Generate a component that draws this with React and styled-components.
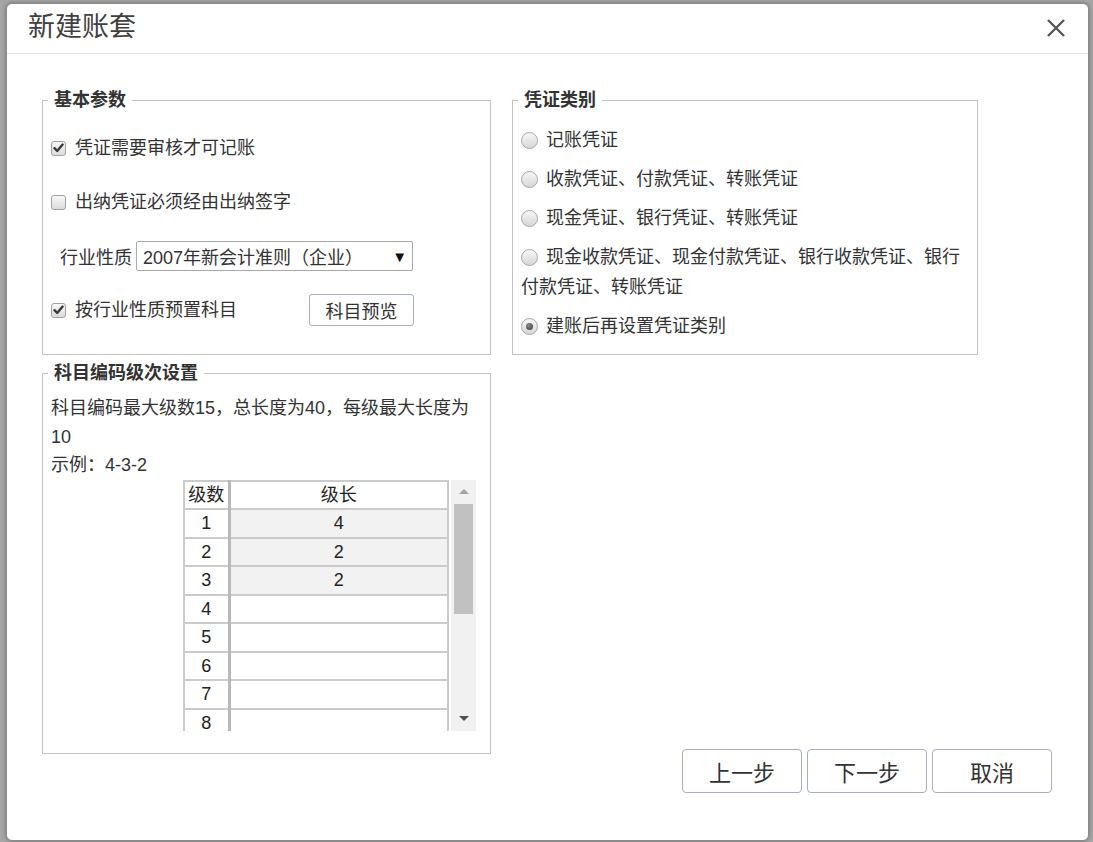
import React from 'react';
import styled, { createGlobalStyle } from 'styled-components';

const GlobalStyle = createGlobalStyle`
  html, body { margin: 0; padding: 0; background: #a6a6a6; }
  body { font-family: "Liberation Sans", "Noto Sans CJK SC", sans-serif; color: #333; }
  * { box-sizing: border-box; }
`;

const Page = styled.div`
  width: 1093px;
  height: 842px;
  padding: 3px 0 0 6px;
`;

const Dialog = styled.div`
  width: 1083px;
  height: 838px;
  background: #fff;
  border: 1px solid #8a8a8a;
  border-radius: 6px;
  box-shadow: 0 0 4px rgba(0, 0, 0, 0.35);
  display: flex;
  flex-direction: column;
  overflow: hidden;
`;

const Header = styled.div`
  height: 50px;
  flex: none;
  display: flex;
  align-items: center;
  justify-content: space-between;
  padding: 0 22px 0 21px;
  border-bottom: 1px solid #e5e5e5;
`;

const Title = styled.div`
  font-size: 27px;
  line-height: 1;
  color: #404040;
  margin-top: -2px;
`;

const CloseBtn = styled.button`
  border: 0;
  background: transparent;
  padding: 0;
  width: 20px;
  height: 20px;
  display: flex;
  margin-top: -2px;
  cursor: pointer;
`;

const Body = styled.div`
  display: grid;
  grid-template-columns: 449px 540px;
  column-gap: 21px;
  row-gap: 6px;
  padding: 34px 0 0 35px;
`;

const Group = styled.fieldset`
  margin: 0 0 ${(p) => p.$mb || 0}px 0;
  min-width: 0;
  width: ${(p) => p.$w}px;
  border: 1px solid #c3c3c3;
  padding: ${(p) => p.$pt}px 8px ${(p) => p.$pb}px 8px;
  align-self: ${(p) => p.$align || 'stretch'};
  justify-self: start;
`;

const Legend = styled.legend`
  font-size: 18px;
  font-weight: bold;
  line-height: 24px;
  padding: 0 6px;
  margin-left: -3px;
  color: #333;
`;

const Row = styled.div`
  display: flex;
  align-items: center;
  height: 54px;
  font-size: 18px;
  padding-left: ${(p) => p.$pl || 0}px;
  padding-right: ${(p) => p.$pr || 0}px;
`;

const CheckLabel = styled.label`
  display: flex;
  align-items: center;
  gap: 9px;
  font-size: 18px;
  line-height: 24px;
`;

const CheckBox = styled.span`
  width: 15px;
  height: 15px;
  flex: none;
  border: 1px solid #a2a2a2;
  border-radius: 3px;
  background: linear-gradient(#f8f8f8, #dcdcdc);
  display: flex;
  align-items: center;
  justify-content: center;
`;

const FieldLabel = styled.span`
  margin-right: 4px;
`;

const Select = styled.div`
  width: 277px;
  height: 30px;
  border: 1px solid #a9a9a9;
  border-radius: 2px;
  display: flex;
  align-items: center;
  justify-content: space-between;
  padding: 0 5px 0 6px;
  font-size: 18px;
  background: #fff;
`;

const SelectArrow = styled.span`
  font-size: 15px;
  color: #111;
  line-height: 1;
`;

const SmallButton = styled.button`
  margin-left: auto;
  width: 105px;
  height: 32px;
  border: 1px solid #a6aec0;
  border-radius: 3px;
  background: #fff;
  font-family: inherit;
  font-size: 18px;
  color: #333;
  padding: 0;
`;

const RadioItem = styled.div`
  font-size: 18px;
  line-height: 30px;
  margin-bottom: 9px;
`;

const Radio = styled.span`
  display: inline-block;
  width: 17px;
  height: 17px;
  border: 1px solid #a8a8a8;
  border-radius: 50%;
  background: linear-gradient(#f7f7f7, #d6d6d6);
  vertical-align: -3px;
  margin-right: 8px;
  position: relative;
  &::after {
    content: '';
    display: ${(p) => (p.$checked ? 'block' : 'none')};
    position: absolute;
    left: 4px;
    top: 4px;
    width: 7px;
    height: 7px;
    border-radius: 50%;
    background: radial-gradient(circle at 40% 35%, #8a8a8a, #3a3a3a);
  }
`;

const Desc = styled.p`
  margin: 0;
  font-size: 18px;
  line-height: 28.5px;
`;

const GridWrap = styled.div`
  margin-left: 132px;
  display: flex;
  gap: 2px;
  height: 251px;
  overflow: hidden;
`;

const LevelTable = styled.table`
  width: 266px;
  border-collapse: collapse;
  table-layout: fixed;
  align-self: flex-start;
  font-size: 18px;
`;

const Cell = styled.td`
  height: 28.5px;
  padding: 0;
  text-align: center;
  font-weight: normal;
  border-top: 2px solid #cbcbcb;
  border-bottom: 2px solid #cbcbcb;
  border-left: ${(p) => (p.$first ? '2px solid #cbcbcb' : '3px solid #b9b9b9')};
  border-right: ${(p) => (p.$first ? '0' : '2px solid #cbcbcb')};
  background: ${(p) => (p.$filled ? '#f2f2f2' : '#fff')};
  line-height: 24px;
  color: #222;
`;

const Scrollbar = styled.div`
  width: 25px;
  flex: none;
  background: #f1f1f1;
  display: flex;
  flex-direction: column;
  align-items: center;
`;

const ArrowBtn = styled.div`
  height: 24px;
  width: 100%;
  display: flex;
  align-items: center;
  justify-content: center;
  &::before {
    content: '';
    border-left: 5px solid transparent;
    border-right: 5px solid transparent;
    ${(p) =>
      p.$up
        ? 'border-bottom: 5px solid #a3a3a3;'
        : 'border-top: 5px solid #505050;'}
  }
`;

const Thumb = styled.div`
  width: 19px;
  height: 110px;
  background: #c1c1c1;
`;

const Spacer = styled.div`
  flex: 1;
`;

const Footer = styled.div`
  grid-column: 2;
  grid-row: 2;
  align-self: end;
  justify-self: end;
  display: flex;
  gap: 5px;
`;

const FootButton = styled.button`
  width: 120px;
  height: 44px;
  border: 1px solid #a7afbf;
  border-radius: 4px;
  background: #fff;
  font-family: inherit;
  font-size: 22px;
  color: #333;
  padding: 0;
`;

const Check = () => (
  <svg width="11" height="10" viewBox="0 0 11 10">
    <path d="M1.5 5.2 L4.2 8 L9.6 1.6" fill="none" stroke="#3a3a3a" strokeWidth="2.4" strokeLinecap="round" strokeLinejoin="round" />
  </svg>
);

const CheckItem = ({ checked, children }) => (
  <CheckLabel>
    <CheckBox>{checked && <Check />}</CheckBox>
    <span>{children}</span>
  </CheckLabel>
);

const levels = [4, 2, 2, '', '', '', '', ''];

const voucherTypes = [
  { text: '记账凭证' },
  { text: '收款凭证、付款凭证、转账凭证' },
  { text: '现金凭证、银行凭证、转账凭证' },
  { text: '现金收款凭证、现金付款凭证、银行收款凭证、银行付款凭证、转账凭证' },
  { text: '建账后再设置凭证类别', checked: true },
];

export default function App() {
  return (
    <Page>
      <GlobalStyle />
      <Dialog>
        <Header>
          <Title>新建账套</Title>
          <CloseBtn aria-label="关闭">
            <svg width="20" height="20" viewBox="0 0 20 20">
              <path d="M2 2 L18 18 M18 2 L2 18" stroke="#555" strokeWidth="2.3" fill="none" />
            </svg>
          </CloseBtn>
        </Header>
        <Body>
          <Group $w={449} $pt={9} $pb={17}>
            <Legend>基本参数</Legend>
            <Row>
              <CheckItem checked>凭证需要审核才可记账</CheckItem>
            </Row>
            <Row>
              <CheckItem>出纳凭证必须经由出纳签字</CheckItem>
            </Row>
            <Row $pl={9}>
              <FieldLabel>行业性质</FieldLabel>
              <Select>
                <span>2007年新会计准则（企业）</span>
                <SelectArrow>▼</SelectArrow>
              </Select>
            </Row>
            <Row $pr={68}>
              <CheckItem checked>按行业性质预置科目</CheckItem>
              <SmallButton>科目预览</SmallButton>
            </Row>
          </Group>

          <Group $w={466} $pt={13} $pb={0}>
            <Legend>凭证类别</Legend>
            {voucherTypes.map((v) => (
              <RadioItem key={v.text}>
                <Radio $checked={v.checked} />
                {v.text}
              </RadioItem>
            ))}
          </Group>

          <Group $w={449} $pt={9} $pb={22} $mb={39} $align="start">
            <Legend>科目编码级次设置</Legend>
            <Desc>科目编码最大级数15，总长度为40，每级最大长度为10</Desc>
            <Desc>示例：4-3-2</Desc>
            <GridWrap>
              <LevelTable>
                <colgroup>
                  <col style={{ width: 45 }} />
                  <col />
                </colgroup>
                <thead>
                  <tr>
                    <Cell as="th" $first>级数</Cell>
                    <Cell as="th">级长</Cell>
                  </tr>
                </thead>
                <tbody>
                  {levels.map((len, i) => (
                    <tr key={i}>
                      <Cell $first>{i + 1}</Cell>
                      <Cell $filled={len !== ''}>{len}</Cell>
                    </tr>
                  ))}
                </tbody>
              </LevelTable>
              <Scrollbar>
                <ArrowBtn $up />
                <Thumb />
                <Spacer />
                <ArrowBtn />
              </Scrollbar>
            </GridWrap>
          </Group>

          <Footer>
            <FootButton>上一步</FootButton>
            <FootButton>下一步</FootButton>
            <FootButton>取消</FootButton>
          </Footer>
        </Body>
      </Dialog>
    </Page>
  );
}
